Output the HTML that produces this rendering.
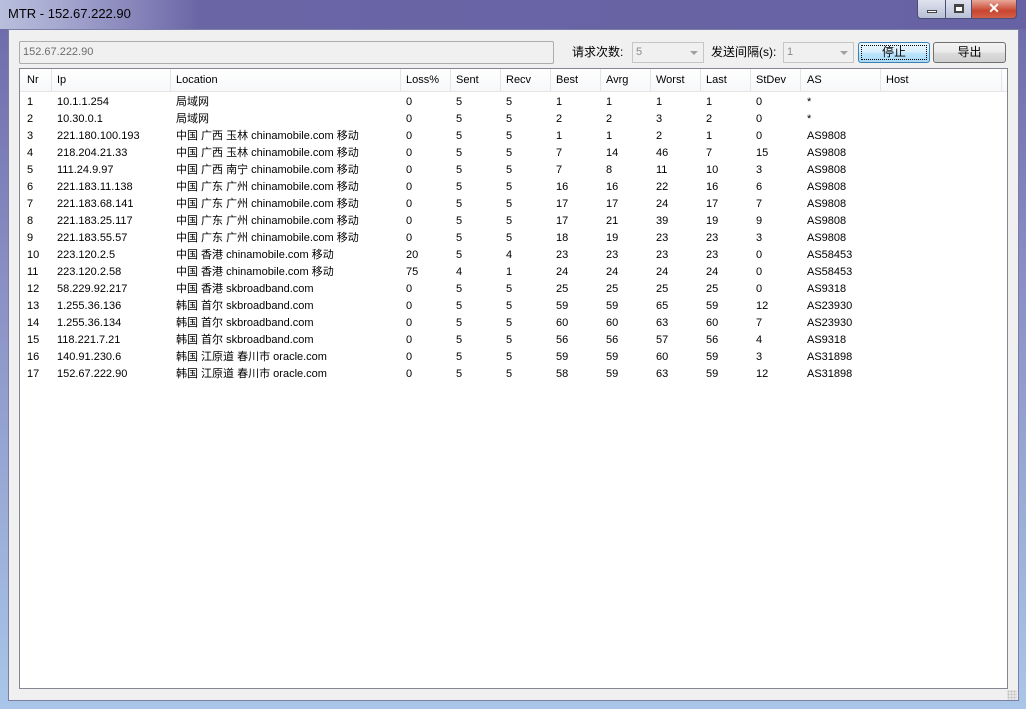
<!DOCTYPE html>
<html><head><meta charset="utf-8"><style>
*{margin:0;padding:0;box-sizing:border-box}
body{width:1026px;height:709px;overflow:hidden;background:linear-gradient(180deg,#6c68a8 0%,#8a90c4 40%,#a9c6e8 100%);font-family:"Liberation Sans","Noto Sans CJK SC",sans-serif;font-size:11px;color:#000;position:relative}
.title{position:absolute;left:0;top:0;width:1026px;height:29px;background:linear-gradient(90deg,#b8bfdc 0px,#a6a8d0 60px,#6a66a6 200px,#6762a3 100%)}
.title span{position:absolute;left:8px;top:6px;font-size:13px;color:#000}
.client{position:absolute;left:8px;top:29px;width:1011px;height:672px;background:#f0f0f0;border:1px solid #7b7fa8}
.abs{position:absolute}
.edit{left:19px;top:41px;width:535px;height:23px;border:1px solid #acacac;background:#f0f0f0;color:#6d6d6d;padding:4px 3px;line-height:13px;font-size:11px;border-radius:2px}
.combo{height:21px;border:1px solid #c6c6c6;background:#f0f0f0;color:#8a8a8a;padding:3px 3px;line-height:13px}
.combo:after{content:"";position:absolute;right:5px;top:8px;border:4px solid transparent;border-top:4px solid #a0a0a0}
.btn{height:21px;border:1px solid #707070;border-radius:3px;background:linear-gradient(#f2f2f2,#ebebeb 50%,#dddddd 51%,#cfcfcf);text-align:center;padding-top:2px;line-height:15px;font-size:12px}
.list{left:19px;top:68px;width:989px;height:621px;border:1px solid #828790;background:#fff}
.hdr{position:absolute;left:0;top:0;height:23px;width:987px;background:linear-gradient(#fff,#f7f8fa);border-bottom:1px solid #e5e5e5}
.hc{position:absolute;top:5px;line-height:13px}
.sep{position:absolute;top:0;width:1px;height:22px;background:#e3e5e8}
.r{position:absolute;height:17px;white-space:nowrap}
.r span{position:absolute;top:3px;line-height:13px;height:13px}
.wbtn{position:absolute;top:0;height:19px;border:1px solid #4a4e78;border-top:none}
</style></head><body>
<div class="title"><span>MTR - 152.67.222.90</span>
<div class="wbtn" style="left:917px;width:29px;border-radius:0 0 0 4px;background:linear-gradient(#dfe3ee,#b9c0d6)"><div style="position:absolute;left:9px;top:10px;width:10px;height:3px;background:#fff;border:1px solid #444"></div></div>
<div class="wbtn" style="left:945px;width:27px;background:linear-gradient(#dfe3ee,#b9c0d6)"><div style="position:absolute;left:8px;top:4px;width:10px;height:9px;border:2px solid #444;border-top-width:3px;background:#fff"></div></div>
<div class="wbtn" style="left:971px;width:46px;border-radius:0 0 4px 0;background:linear-gradient(#e9a89a,#c8452f 60%,#d2604a);color:#fff;font-weight:bold;text-align:center;font-size:14px;line-height:17px">✕</div>
</div>
<div class="client"></div>
<div class="abs edit">152.67.222.90</div>
<div class="abs" style="left:572px;top:45px;font-size:12px;line-height:15px">请求次数:</div>
<div class="abs combo" style="left:632px;top:42px;width:72px">5</div>
<div class="abs" style="left:711px;top:45px;font-size:12px;line-height:15px">发送间隔(s):</div>
<div class="abs combo" style="left:783px;top:42px;width:71px">1</div>
<div class="abs btn" style="left:858px;top:42px;width:72px;border-color:#3c7fb1;background:linear-gradient(#eaf6fd,#d9f0fc 50%,#bee6fd 51%,#a7d9f5);outline:1px dotted #000;outline-offset:-4px">停止</div>
<div class="abs btn" style="left:933px;top:42px;width:73px">导出</div>
<div class="abs list">
<div class="hdr">
<span class="hc" style="left:7px">Nr</span><span class="hc" style="left:37px">Ip</span><span class="hc" style="left:156px">Location</span><span class="hc" style="left:386px">Loss%</span><span class="hc" style="left:436px">Sent</span><span class="hc" style="left:486px">Recv</span><span class="hc" style="left:536px">Best</span><span class="hc" style="left:586px">Avrg</span><span class="hc" style="left:636px">Worst</span><span class="hc" style="left:686px">Last</span><span class="hc" style="left:736px">StDev</span><span class="hc" style="left:787px">AS</span><span class="hc" style="left:866px">Host</span>
<div class="sep" style="left:31px"></div><div class="sep" style="left:150px"></div><div class="sep" style="left:380px"></div><div class="sep" style="left:430px"></div><div class="sep" style="left:480px"></div><div class="sep" style="left:530px"></div><div class="sep" style="left:580px"></div><div class="sep" style="left:630px"></div><div class="sep" style="left:680px"></div><div class="sep" style="left:730px"></div><div class="sep" style="left:780px"></div><div class="sep" style="left:860px"></div><div class="sep" style="left:981px"></div>
</div>
</div>
<div class="abs" style="left:1007px;top:690px;width:10px;height:10px;background:radial-gradient(circle,#bbb 1px,transparent 1.2px) 0 0/3px 3px"></div>
<div style="position:absolute;left:7px;top:69px;width:1012px;">
<div style="position:absolute;left:12px;top:0;width:989px">
<div class="r" style="top:24px;left:0"><span style="left:8px">1</span><span style="left:38px">10.1.1.254</span><span style="left:157px">局域网</span><span style="left:387px">0</span><span style="left:437px">5</span><span style="left:487px">5</span><span style="left:537px">1</span><span style="left:587px">1</span><span style="left:637px">1</span><span style="left:687px">1</span><span style="left:737px">0</span><span style="left:788px">*</span></div>
<div class="r" style="top:41px;left:0"><span style="left:8px">2</span><span style="left:38px">10.30.0.1</span><span style="left:157px">局域网</span><span style="left:387px">0</span><span style="left:437px">5</span><span style="left:487px">5</span><span style="left:537px">2</span><span style="left:587px">2</span><span style="left:637px">3</span><span style="left:687px">2</span><span style="left:737px">0</span><span style="left:788px">*</span></div>
<div class="r" style="top:58px;left:0"><span style="left:8px">3</span><span style="left:38px">221.180.100.193</span><span style="left:157px">中国 广西 玉林 chinamobile.com 移动</span><span style="left:387px">0</span><span style="left:437px">5</span><span style="left:487px">5</span><span style="left:537px">1</span><span style="left:587px">1</span><span style="left:637px">2</span><span style="left:687px">1</span><span style="left:737px">0</span><span style="left:788px">AS9808</span></div>
<div class="r" style="top:75px;left:0"><span style="left:8px">4</span><span style="left:38px">218.204.21.33</span><span style="left:157px">中国 广西 玉林 chinamobile.com 移动</span><span style="left:387px">0</span><span style="left:437px">5</span><span style="left:487px">5</span><span style="left:537px">7</span><span style="left:587px">14</span><span style="left:637px">46</span><span style="left:687px">7</span><span style="left:737px">15</span><span style="left:788px">AS9808</span></div>
<div class="r" style="top:92px;left:0"><span style="left:8px">5</span><span style="left:38px">111.24.9.97</span><span style="left:157px">中国 广西 南宁 chinamobile.com 移动</span><span style="left:387px">0</span><span style="left:437px">5</span><span style="left:487px">5</span><span style="left:537px">7</span><span style="left:587px">8</span><span style="left:637px">11</span><span style="left:687px">10</span><span style="left:737px">3</span><span style="left:788px">AS9808</span></div>
<div class="r" style="top:109px;left:0"><span style="left:8px">6</span><span style="left:38px">221.183.11.138</span><span style="left:157px">中国 广东 广州 chinamobile.com 移动</span><span style="left:387px">0</span><span style="left:437px">5</span><span style="left:487px">5</span><span style="left:537px">16</span><span style="left:587px">16</span><span style="left:637px">22</span><span style="left:687px">16</span><span style="left:737px">6</span><span style="left:788px">AS9808</span></div>
<div class="r" style="top:126px;left:0"><span style="left:8px">7</span><span style="left:38px">221.183.68.141</span><span style="left:157px">中国 广东 广州 chinamobile.com 移动</span><span style="left:387px">0</span><span style="left:437px">5</span><span style="left:487px">5</span><span style="left:537px">17</span><span style="left:587px">17</span><span style="left:637px">24</span><span style="left:687px">17</span><span style="left:737px">7</span><span style="left:788px">AS9808</span></div>
<div class="r" style="top:143px;left:0"><span style="left:8px">8</span><span style="left:38px">221.183.25.117</span><span style="left:157px">中国 广东 广州 chinamobile.com 移动</span><span style="left:387px">0</span><span style="left:437px">5</span><span style="left:487px">5</span><span style="left:537px">17</span><span style="left:587px">21</span><span style="left:637px">39</span><span style="left:687px">19</span><span style="left:737px">9</span><span style="left:788px">AS9808</span></div>
<div class="r" style="top:160px;left:0"><span style="left:8px">9</span><span style="left:38px">221.183.55.57</span><span style="left:157px">中国 广东 广州 chinamobile.com 移动</span><span style="left:387px">0</span><span style="left:437px">5</span><span style="left:487px">5</span><span style="left:537px">18</span><span style="left:587px">19</span><span style="left:637px">23</span><span style="left:687px">23</span><span style="left:737px">3</span><span style="left:788px">AS9808</span></div>
<div class="r" style="top:177px;left:0"><span style="left:8px">10</span><span style="left:38px">223.120.2.5</span><span style="left:157px">中国 香港 chinamobile.com 移动</span><span style="left:387px">20</span><span style="left:437px">5</span><span style="left:487px">4</span><span style="left:537px">23</span><span style="left:587px">23</span><span style="left:637px">23</span><span style="left:687px">23</span><span style="left:737px">0</span><span style="left:788px">AS58453</span></div>
<div class="r" style="top:194px;left:0"><span style="left:8px">11</span><span style="left:38px">223.120.2.58</span><span style="left:157px">中国 香港 chinamobile.com 移动</span><span style="left:387px">75</span><span style="left:437px">4</span><span style="left:487px">1</span><span style="left:537px">24</span><span style="left:587px">24</span><span style="left:637px">24</span><span style="left:687px">24</span><span style="left:737px">0</span><span style="left:788px">AS58453</span></div>
<div class="r" style="top:211px;left:0"><span style="left:8px">12</span><span style="left:38px">58.229.92.217</span><span style="left:157px">中国 香港 skbroadband.com</span><span style="left:387px">0</span><span style="left:437px">5</span><span style="left:487px">5</span><span style="left:537px">25</span><span style="left:587px">25</span><span style="left:637px">25</span><span style="left:687px">25</span><span style="left:737px">0</span><span style="left:788px">AS9318</span></div>
<div class="r" style="top:228px;left:0"><span style="left:8px">13</span><span style="left:38px">1.255.36.136</span><span style="left:157px">韩国 首尔 skbroadband.com</span><span style="left:387px">0</span><span style="left:437px">5</span><span style="left:487px">5</span><span style="left:537px">59</span><span style="left:587px">59</span><span style="left:637px">65</span><span style="left:687px">59</span><span style="left:737px">12</span><span style="left:788px">AS23930</span></div>
<div class="r" style="top:245px;left:0"><span style="left:8px">14</span><span style="left:38px">1.255.36.134</span><span style="left:157px">韩国 首尔 skbroadband.com</span><span style="left:387px">0</span><span style="left:437px">5</span><span style="left:487px">5</span><span style="left:537px">60</span><span style="left:587px">60</span><span style="left:637px">63</span><span style="left:687px">60</span><span style="left:737px">7</span><span style="left:788px">AS23930</span></div>
<div class="r" style="top:262px;left:0"><span style="left:8px">15</span><span style="left:38px">118.221.7.21</span><span style="left:157px">韩国 首尔 skbroadband.com</span><span style="left:387px">0</span><span style="left:437px">5</span><span style="left:487px">5</span><span style="left:537px">56</span><span style="left:587px">56</span><span style="left:637px">57</span><span style="left:687px">56</span><span style="left:737px">4</span><span style="left:788px">AS9318</span></div>
<div class="r" style="top:279px;left:0"><span style="left:8px">16</span><span style="left:38px">140.91.230.6</span><span style="left:157px">韩国 江原道 春川市 oracle.com</span><span style="left:387px">0</span><span style="left:437px">5</span><span style="left:487px">5</span><span style="left:537px">59</span><span style="left:587px">59</span><span style="left:637px">60</span><span style="left:687px">59</span><span style="left:737px">3</span><span style="left:788px">AS31898</span></div>
<div class="r" style="top:296px;left:0"><span style="left:8px">17</span><span style="left:38px">152.67.222.90</span><span style="left:157px">韩国 江原道 春川市 oracle.com</span><span style="left:387px">0</span><span style="left:437px">5</span><span style="left:487px">5</span><span style="left:537px">58</span><span style="left:587px">59</span><span style="left:637px">63</span><span style="left:687px">59</span><span style="left:737px">12</span><span style="left:788px">AS31898</span></div>
</div></div>
</body></html>
